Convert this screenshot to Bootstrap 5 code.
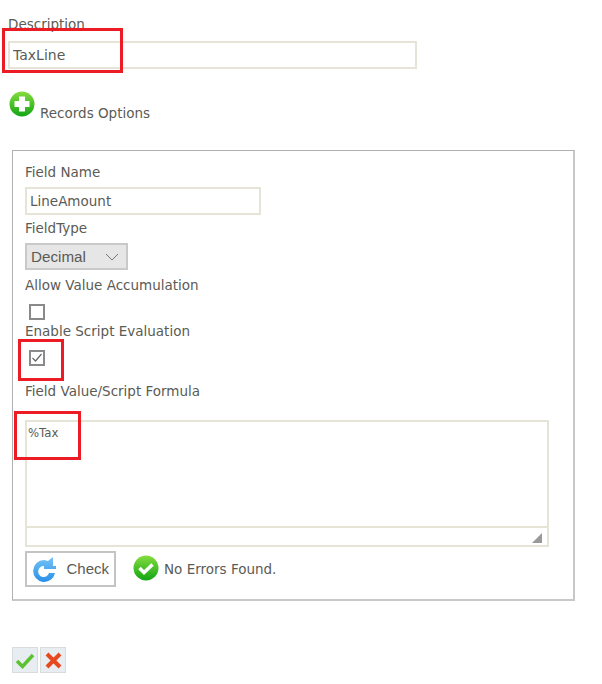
<!DOCTYPE html>
<html lang="en">
<head>
  <meta charset="UTF-8">
  <meta name="viewport" content="width=device-width, initial-scale=1">
  <title>Records Options</title>
  <link href="https://cdn.jsdelivr.net/npm/bootstrap@5.3.0/dist/css/bootstrap.min.css" rel="stylesheet">
  <style>
    html, body { height: 684px; overflow: hidden; }
    body { font-family: "DejaVu Sans", sans-serif; font-size: 13.5px; line-height: 18px; color: #5b5b55; background: #fff; position: relative; }
    .page-wrap { padding: 15px 0 0 8px; }
    .field-label { display: block; height: 18px; margin: 0; }
    .text-field { display: block; height: 28px; border: 2px solid #e6e4d7; padding: 0 3px; font: inherit; color: #5b5b55; background: #fff; outline: 0; border-radius: 0; }
    .desc-field { width: 409px; margin-top: 8px; font-size: 14px; }
    .records-row { margin: 22px 0 0 1px; height: 26px; }
    .records-row span { margin: 0 0 0 5px; position: relative; top: 13px; }
    .options-box { width: 563px; height: 451px; margin: 33px 0 0 4px; border: 1px solid #b0b0b0; border-right: 2px solid #c8c8c8; border-bottom: 2px solid #c8c8c8; padding: 11px 11px 0 12px; }
    .options-box .field-label { line-height: 20px; }
    .name-field { width: 236px; margin-top: 7px; }
    .type-label { margin-top: 3px; }
    .type-select { width: 103px; height: 27px; margin-top: 7px; padding: 1px 7px 0 4px; background: #e6e6e6; border: 2px solid #c9c9c9; font-family: "Liberation Sans", sans-serif; font-size: 15.2px; }
    .allow-label { margin-top: 5px; }
    .check-box { width: 16px; height: 16px; margin: 11px 0 0 4px; border: 2px solid #8a8a8a; background: #fff; }
    .enable-label { margin-top: 1px; }
    .formula-label { margin-top: 15px; }
    .script-area { width: 524px; height: 127px; margin-top: 21px; border: 2px solid #e6e4d7; }
    .script-text { height: 104px; padding: 3px 1px; font-size: 11.7px; line-height: 16px; }
    .script-foot { height: 19px; border-top: 2px solid #e6e4d7; padding: 5px 5px 0 0; }
    .check-row { margin-top: 4px; height: 36px; }
    .check-btn { width: 91px; height: 36px; padding: 1px 5px 0 4px; border: 2px solid #c4c4c4; border-radius: 0; background: #fff; font-family: "Liberation Sans", sans-serif; font-size: 15px; color: #5b5b55; }
    .check-btn svg { margin-top: -1px; }
    .check-msg { margin-left: 17px; gap: 5px; }
    .check-msg svg { margin-top: -3px; }
    .action-row { margin: 46px 0 0 4px; gap: 2px; }
    .act-btn { width: 26px; height: 26px; padding: 0; border: 1px solid #d8dcdc; border-radius: 0; background: #e7edf0; }
    .red-mark { position: absolute; border: 3px solid #ec1c24; }
    .mark-desc { left: 2px; top: 28px; width: 121px; height: 45px; }
    .mark-check { left: 18px; top: 339px; width: 46px; height: 42px; }
    .mark-formula { left: 14px; top: 411px; width: 67px; height: 49px; }
  </style>
</head>
<body>
  <div class="page-wrap">
    <label class="field-label">Description</label>
    <input class="text-field desc-field" type="text" value="TaxLine">

    <div class="records-row d-flex">
      <svg width="26" height="26" viewBox="0 0 26 26">
        <defs>
          <linearGradient id="greenBall" x1="0" y1="0" x2="0" y2="1">
            <stop offset="0" stop-color="#86dc40"/>
            <stop offset="1" stop-color="#12a514"/>
          </linearGradient>
        </defs>
        <circle cx="13" cy="13" r="12.5" fill="url(#greenBall)"/>
        <path d="M10 5.500h6v4.500h4.500v6H16v4.500h-6V16H5.500v-6H10z" fill="#fff"/>
      </svg>
      <span>Records Options</span>
    </div>

    <div class="options-box">
      <label class="field-label">Field Name</label>
      <input class="text-field name-field" type="text" value="LineAmount">
      <label class="field-label type-label">FieldType</label>
      <div class="type-select d-flex align-items-center justify-content-between">
        <span>Decimal</span>
        <svg width="14" height="8" viewBox="0 0 14 8"><path d="M1 1l6 6 6-6" fill="none" stroke="#777" stroke-width="1"/></svg>
      </div>
      <label class="field-label allow-label">Allow Value Accumulation</label>
      <div class="check-box"></div>
      <label class="field-label enable-label">Enable Script Evaluation</label>
      <div class="check-box d-flex align-items-center justify-content-center">
        <svg width="12" height="10" viewBox="0 0 12 10"><path d="M1.500 5l3 3 6-7" fill="none" stroke="#666" stroke-width="1.200"/></svg>
      </div>
      <label class="field-label formula-label">Field Value/Script Formula</label>
      <div class="script-area">
        <div class="script-text">%Tax</div>
        <div class="script-foot d-flex justify-content-end">
          <svg width="10" height="10" viewBox="0 0 10 10"><path d="M10 0v10H0z" fill="#999"/></svg>
        </div>
      </div>
      <div class="check-row d-flex align-items-center">
        <button class="check-btn btn d-flex align-items-center justify-content-between" type="button">
          <svg width="26" height="28" viewBox="0 0 26 28">
            <defs>
              <linearGradient id="blueBall" x1="0" y1="0" x2="0" y2="1">
                <stop offset="0" stop-color="#74c4f6"/>
                <stop offset="1" stop-color="#2a8fe6"/>
              </linearGradient>
            </defs>
            <path d="M13 5a11 11 0 1 0 11 13h-6a5.500 5.500 0 1 1-5-7v3h12V11h-3V2l-5 4z" fill="url(#blueBall)"/>
          </svg>
          <span>Check</span>
        </button>
        <div class="check-msg d-flex align-items-center">
          <svg width="26" height="26" viewBox="0 0 26 26">
            <circle cx="13" cy="13" r="12.500" fill="url(#greenBall)"/>
            <path d="M6.500 13l4.500 4.500 8.500-8" fill="none" stroke="#fff" stroke-width="3.500"/>
          </svg>
          <span>No Errors Found.</span>
        </div>
      </div>
    </div>

    <div class="action-row d-flex">
      <button class="act-btn btn d-flex align-items-center justify-content-center" type="button">
        <svg width="20" height="17" viewBox="0 0 20 17"><path d="M2 9l5.500 5.500L18 3" fill="none" stroke="#5cc232" stroke-width="3.500"/></svg>
      </button>
      <button class="act-btn btn d-flex align-items-center justify-content-center" type="button">
        <svg width="17" height="17" viewBox="0 0 17 17"><path d="M2 2l13 13M15 2L2 15" fill="none" stroke="#e8481f" stroke-width="4"/></svg>
      </button>
    </div>
  </div>

  <div class="red-mark mark-desc"></div>
  <div class="red-mark mark-check"></div>
  <div class="red-mark mark-formula"></div>

  <script src="https://cdn.jsdelivr.net/npm/bootstrap@5.3.0/dist/js/bootstrap.bundle.min.js"></script>
</body>
</html>
